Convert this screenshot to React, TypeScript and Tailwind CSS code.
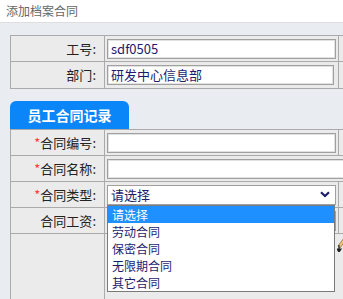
import React from 'react'

const font = { fontFamily: '"Microsoft YaHei", "Noto Sans CJK SC", "Liberation Sans", sans-serif' }

const Label: React.FC<{ text: string; required?: boolean }> = ({ text, required }) => (
  <td className="border border-[#aaaaaa] bg-[#ebebeb] text-right pr-[8px] text-[13px] text-[#222]">
    {required && <span className="text-[#ff3b3b]">*</span>}
    {text}:
  </td>
)

const Box: React.FC<{ value?: string; className?: string }> = ({ value, className }) => (
  <div
    className={`h-[20px] bg-white border border-[#a0a0a0] shadow-[inset_0_0_0_1px_#e2e2e2] pl-[3px] text-[13px] leading-[18px] text-[#1c1c6e] ${className ?? 'w-[229px]'}`}
  >
    {value}
  </div>
)

const options = ['请选择', '劳动合同', '保密合同', '无限期合同', '其它合同']

export default function App() {
  return (
    <div className="w-[343px] h-[299px] overflow-hidden bg-[#e9ecf0]" style={font}>
      <div className="h-[23px] bg-white border-b border-[#dedede] pl-[6px] text-[12px] leading-[21px] text-[#666]">
        添加档案合同
      </div>

      <div className="pl-[10px] pt-[12px]">
        <table className="border-collapse table-fixed w-[380px] bg-[#ebebeb]">
          <colgroup>
            <col className="w-[94px]" />
            <col className="w-[234px]" />
            <col />
          </colgroup>
          <tbody>
            <tr className="h-[26px]">
              <Label text="工号" />
              <td className="border border-[#aaaaaa] pl-[2px]">
                <Box value="sdf0505" />
              </td>
              <td className="border border-[#aaaaaa]" />
            </tr>
            <tr className="h-[27px]">
              <Label text="部门" />
              <td className="border border-[#aaaaaa] pl-[2px]">
                <Box value="研发中心信息部" className="w-[227px]" />
              </td>
              <td className="border border-[#aaaaaa]" />
            </tr>
          </tbody>
        </table>

        <div className="mt-[12px] w-[119px] h-[28px] rounded-t-[6px] bg-[#0a86f8] flex items-center justify-center text-white text-[14px] font-bold">
          员工合同记录
        </div>

        <table className="border-collapse table-fixed w-[380px] bg-[#ebebeb]">
          <colgroup>
            <col className="w-[94px]" />
            <col className="w-[234px]" />
            <col />
          </colgroup>
          <tbody>
            <tr className="h-[26px]">
              <Label text="合同编号" required />
              <td className="border border-[#aaaaaa] pl-[2px]">
                <Box />
              </td>
              <td className="border border-[#aaaaaa]" />
            </tr>
            <tr className="h-[26px]">
              <Label text="合同名称" required />
              <td className="border border-[#aaaaaa] pl-[2px]" colSpan={2}>
                <Box className="w-[280px]" />
              </td>
            </tr>
            <tr className="h-[26px]">
              <Label text="合同类型" required />
              <td className="border border-[#aaaaaa] pl-[2px]">
                <div className="relative w-[229px]">
                  <div className="h-[20px] bg-white border border-[#a0a0a0] pl-[3px] flex items-center justify-between text-[13px] text-[#1c1c6e]">
                    <span>请选择</span>
                    <svg width="10" height="7" viewBox="0 0 10 7" className="mr-[5px]">
                      <path d="M1 1.2 L5 5 L9 1.2" fill="none" stroke="#1c1c6e" strokeWidth="2.2" />
                    </svg>
                  </div>
                  <ul className="absolute left-0 top-[20px] z-10 w-[228px] bg-white border border-[#7a7a7a] text-[12px] text-[#1c1c6e]">
                    {options.map((o, i) => (
                      <li
                        key={o}
                        className={`h-[17px] leading-[17px] pl-[4px] ${i === 0 ? 'bg-[#1e90ff] text-white' : ''}`}
                      >
                        {o}
                      </li>
                    ))}
                  </ul>
                </div>
              </td>
              <td className="border border-[#aaaaaa]" />
            </tr>
            <tr className="h-[26px]">
              <Label text="合同工资" />
              <td className="border border-[#aaaaaa] pl-[2px]">
                <Box />
              </td>
              <td className="border border-[#aaaaaa]" />
            </tr>
            <tr className="h-[70px] align-top">
              <td className="border border-[#aaaaaa]" />
              <td className="border border-[#aaaaaa] border-r-0" />
              <td className="border border-[#aaaaaa] border-l-0 pt-[2px]">
                <svg width="10" height="16" viewBox="0 0 10 16" className="-ml-[2px]">
                  <path d="M1 10 L7 2 L9 4 L3 12 Z" fill="#f3c77a" stroke="#8a6a3a" strokeWidth="0.8" />
                  <path d="M7 2 L8 1 L10 3 L9 4 Z" fill="#e05050" />
                  <path d="M2 9 L2 15 M0 13 L4 13 L2 16 Z" stroke="#222" strokeWidth="1.2" fill="#222" />
                </svg>
              </td>
            </tr>
          </tbody>
        </table>
      </div>
    </div>
  )
}
